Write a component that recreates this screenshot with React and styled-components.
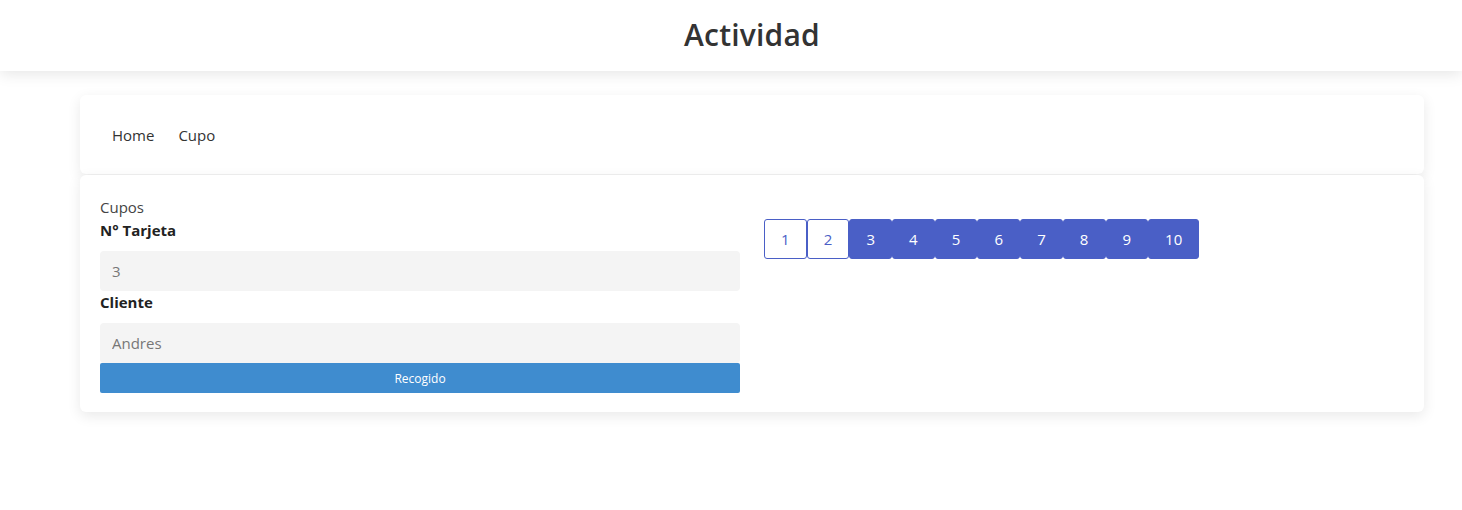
import React, { useState } from 'react';
import styled, { createGlobalStyle } from 'styled-components';

const GlobalStyle = createGlobalStyle`
    body {
        margin: 0;
        background: #fff;
        font-family: "Open Sans", "Noto Sans", sans-serif;
        color: #333;
    }
`;

const Header = styled.header`
    height: 71px;
    display: flex;
    align-items: center;
    justify-content: center;
    padding-left: 42px;
    background: #fff;
    box-shadow: 0 3px 14px rgba(0,0,0,0.1);
    position: relative;
    z-index: 1;
`;

const Title = styled.h1`
    margin: 0 0 2px;
    font-size: 30px;
    font-weight: 600;
    color: #333;
    letter-spacing: 0.2px;
`;

const Main = styled.main`
    padding: 24px 38px 60px 80px;
    display: flex;
    flex-direction: column;
    gap: 1px;
`;

const Card = styled.section`
    background: #fff;
    border-radius: 6px;
    box-shadow: 0 4px 14px rgba(0,0,0,0.09);
`;

const Nav = styled(Card)`
    height: 79px;
    display: flex;
    align-items: center;
    padding: 0 32px;
    gap: 24px;
`;

const NavLink = styled.a`
    font-size: 15px;
    color: #333;
    text-decoration: none;
    cursor: pointer;
`;

const Body = styled(Card)`
    padding: 20px 20px 19px;
    display: grid;
    grid-template-columns: 1fr 1fr;
    column-gap: 24px;
`;

const Form = styled.div`
    display: flex;
    flex-direction: column;
`;

const Caption = styled.div`
    font-size: 15px;
    color: #444;
    line-height: 24px;
`;

const Label = styled.label`
    font-size: 15px;
    font-weight: 700;
    color: #222;
    line-height: 22px;
    margin-bottom: 10px;
`;

const Field = styled.input`
    height: 40px;
    box-sizing: border-box;
    border: none;
    border-radius: 4px;
    background: #f4f4f4;
    padding: 0 12px;
    font-family: inherit;
    font-size: 15px;
    color: #777;
    outline: none;
`;

const Submit = styled.button`
    height: 30px;
    border: none;
    border-radius: 2px;
    background: #3f8ccf;
    color: #fff;
    font-family: inherit;
    font-size: 12px;
    cursor: pointer;
`;

const Pages = styled.div`
    display: flex;
    align-items: flex-start;
    padding-top: 24px;
`;

const PageButton = styled.button`
    height: 40px;
    min-width: ${p => (p.$wide ? '51px' : '42.7px')};
    box-sizing: border-box;
    border: 1px solid #4a5fc6;
    border-radius: 3px;
    background: ${p => (p.$filled ? '#4a5fc6' : '#fff')};
    color: ${p => (p.$filled ? '#fff' : '#4a5fc6')};
    font-family: inherit;
    font-size: 15px;
    padding: 0;
    cursor: pointer;
`;

const App = () => {
    const [page] = useState(2);
    const pages = [1, 2, 3, 4, 5, 6, 7, 8, 9, 10];

    return (
        <>
            <GlobalStyle />
            <Header>
                <Title>Actividad</Title>
            </Header>
            <Main>
                <Nav>
                    <NavLink>Home</NavLink>
                    <NavLink>Cupo</NavLink>
                </Nav>
                <Body>
                    <Form>
                        <Caption>Cupos</Caption>
                        <Label>N° Tarjeta</Label>
                        <Field defaultValue="3" />
                        <Label>Cliente</Label>
                        <Field defaultValue="Andres" />
                        <Submit>Recogido</Submit>
                    </Form>
                    <Pages>
                        {pages.map(n => (
                            <PageButton key={n} $filled={n > page} $wide={n === 10}>{n}</PageButton>
                        ))}
                    </Pages>
                </Body>
            </Main>
        </>
    );
};

export default App;
